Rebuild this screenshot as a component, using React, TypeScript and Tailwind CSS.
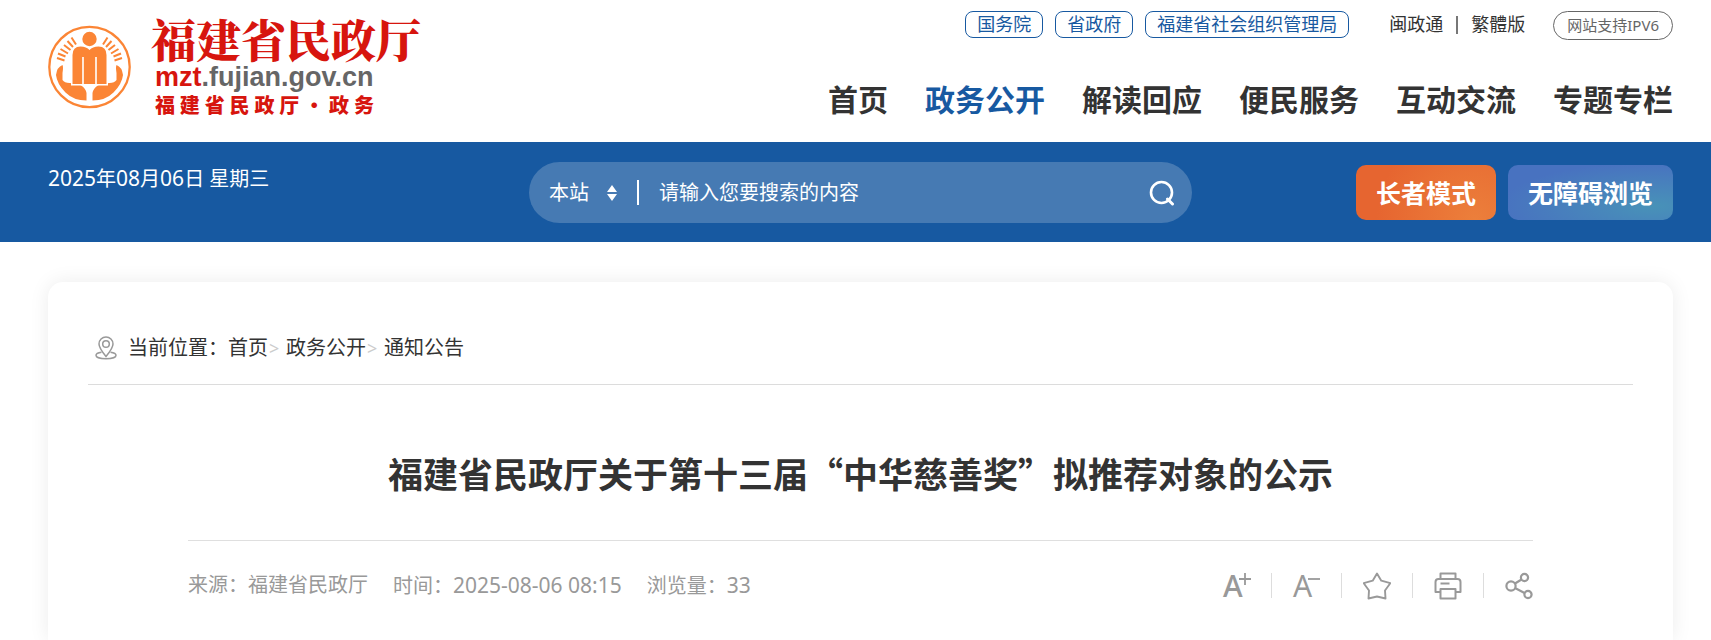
import React, { useState } from 'react';

const TOP_LINKS = ['国务院', '省政府', '福建省社会组织管理局'];

const NAV_ITEMS = ['首页', '政务公开', '解读回应', '便民服务', '互动交流', '专题专栏'];

const HAND = 'M14.500 40q1 2 0 8v7q2 3 7 3q15 0 17 10v7.500q-13 0-21-8Q9 59 8 50q1-8 6.500-10z';
const RAYS = 'M9 33l7.500 2.500M10 28.500l7.500 3M12.500 24l7.500 4.500M16 20l6.500 5M19.500 16l5.500 6M23.500 12.500l4.500 7';

const Emblem = (): React.ReactNode => (
  <svg viewBox="0 0 84 84" className="w-21 h-21 shrink-0" aria-hidden="true">
    <circle cx="41.500" cy="42" r="40.200" fill="none" stroke="#fb8535" strokeWidth="2.300" />
    <circle cx="41.500" cy="14" r="7.200" fill="#fb8535" />
    <path d={HAND} fill="#fb8535" />
    <path d={RAYS} stroke="#fb8535" strokeWidth="2" />
    <g transform="translate(83 0) scale(-1 1)">
      <path d={HAND} fill="#fb8535" />
      <path d={RAYS} stroke="#fb8535" strokeWidth="2" />
    </g>
    <path
      d="M24.500 59V30q0-8.500 8-8.500q6 0 9 3.500q3-3.500 9-3.500q8 0 8 8.500v29z"
      fill="#fb8535"
      stroke="#fff"
      strokeWidth="3"
      paintOrder="stroke"
    />
    <path d="M35 60V32M48 60V32" fill="none" stroke="#fff" strokeWidth="1.600" />
  </svg>
);

const Logo = (): React.ReactNode => (
  <a href="#" className="flex self-start items-center gap-[19px] pt-4">
    <Emblem />
    <div className="text-[#d7150e]">
      <div className="text-[45px] leading-[46px] font-black font-['Noto_Serif_CJK_SC','Noto_Sans_CJK_SC',serif]">
        福建省民政厅
      </div>
      <div className="pl-1 text-[27px] leading-[30px] font-bold font-['Liberation_Sans',sans-serif]">
        mzt<span className="text-[#666]">.fujian.gov.cn</span>
      </div>
      <div className="ml-1 w-[219px] text-xl leading-[26px] font-black font-['Noto_Sans_CJK_SC',sans-serif] [text-align-last:justify]">
        福建省民政厅·政务
      </div>
    </div>
  </a>
);

const Header = (): React.ReactNode => (
  <header className="flex justify-between h-[142px] pl-12 pr-[38px]">
    <Logo />
    <div className="flex flex-col items-end pt-[11px]">
      <div className="flex items-start text-lg leading-[25px]">
        <div className="flex gap-3">
          {TOP_LINKS.map((link) => (
            <a key={link} href="#" className="px-[11px] border border-[#1759a1] rounded-lg text-[#1759a1]">
              {link}
            </a>
          ))}
        </div>
        <div className="flex items-center ml-10 pt-px">
          <a href="#">闽政通</a>
          <span className="w-0.5 h-[18px] mx-[13px] bg-[#777]" />
          <a href="#">繁體版</a>
        </div>
        <a
          href="#"
          className="ml-7 px-[13px] border border-[#666] rounded-full text-[15px] leading-[27px] text-[#666]"
        >
          网站支持IPV6
        </a>
      </div>
      <nav className="flex gap-[37px] mt-[37px] text-[30px] leading-[45px] font-bold">
        {NAV_ITEMS.map((item) => (
          <a key={item} href="#" className={item === '政务公开' ? 'text-[#1759a1]' : ''}>
            {item}
          </a>
        ))}
      </nav>
    </div>
  </header>
);

const SearchBar = (): React.ReactNode => {
  const [keyword, setKeyword] = useState('');

  return (
    <form
      className="flex items-center w-[663px] h-[61px] mt-5 pl-5 pr-[17px] rounded-full bg-[#467ab3] text-xl"
      onSubmit={(e) => e.preventDefault()}
    >
      <select aria-label="搜索范围" className="appearance-none w-[58px] bg-transparent outline-none">
        <option>本站</option>
      </select>
      <svg viewBox="0 0 10 16" className="w-2.5 h-4 shrink-0" fill="#fff" aria-hidden="true">
        <path d="M5 0l5 7H0zM5 16l5-7H0z" />
      </svg>
      <span className="w-0.5 h-[25px] ml-5 mr-5 bg-white" />
      <input
        aria-label="搜索内容"
        className="flex-1 min-w-0 bg-transparent outline-none placeholder:text-white"
        placeholder="请输入您要搜索的内容"
        value={keyword}
        onChange={(e) => setKeyword(e.target.value)}
      />
      <button type="submit" aria-label="搜索">
        <svg viewBox="0 0 26 26" className="w-[26px] h-[26px]" fill="none" stroke="#fff" strokeWidth="2.6">
          <circle cx="12.5" cy="12.5" r="10.5" />
          <path d="M18.5 19l5 5" strokeWidth="3" strokeLinecap="round" />
        </svg>
      </button>
    </form>
  );
};

const Toolbar = (): React.ReactNode => (
  <div className="flex justify-between h-[100px] pl-12 pr-[38px] bg-[#1759a1] text-white">
    <div className="flex-1 pt-[21px] text-xl leading-[30px]">
      <span className="text-[21px]">2025</span>年<span className="text-[21px]">08</span>月
      <span className="text-[21px]">06</span>日 星期三
    </div>
    <SearchBar />
    <div className="flex flex-1 items-start justify-end gap-3 pt-[23px] text-[25px] leading-[53px] font-bold">
      <button className="pt-0.5 px-5 rounded-[10px] bg-[radial-gradient(circle_at_85%_100%,#ec7f3b,#e66530_75%)]">
        长者模式
      </button>
      <button className="pt-0.5 px-5 rounded-[10px] bg-[radial-gradient(ellipse_at_88%_75%,#4892b8,#4872c0_75%)]">
        无障碍浏览
      </button>
    </div>
  </div>
);

const Breadcrumb = (): React.ReactNode => (
  <nav className="flex items-center h-[63px] pl-[7px] pb-2.5 border-b border-[#dcdcdc] text-xl">
    <svg viewBox="0 0 22 24" className="w-[22px] h-6 mr-[11px]" fill="none" stroke="#999" strokeWidth="1.5">
      <path d="M11 20.500Q4 12 4 8a7 7 0 0 1 14 0q0 4-7 12.500z" />
      <circle cx="11" cy="8" r="3.300" />
      <path d="M6.500 16.200C3 16.700 1 17.800 1 19.200c0 2 4 3.600 10 3.600s10-1.600 10-3.600c0-1.400-2-2.500-5.500-3" />
    </svg>
    <span>当前位置：</span>
    <a href="#">首页</a>
    <span className="w-[18px] pl-px text-lg text-[#ccc]">&gt;</span>
    <a href="#">政务公开</a>
    <span className="w-[18px] pl-px text-lg text-[#ccc]">&gt;</span>
    <a href="#">通知公告</a>
  </nav>
);

const Divider = (): React.ReactNode => <span className="w-px h-[25px] bg-[#ddd]" />;

const ArticleTools = (): React.ReactNode => (
  <div className="flex items-center gap-[21px]">
    <button aria-label="放大字体" className="flex w-[27px] h-[26px] text-[30px] leading-[26px] font-medium">
      A
      <svg viewBox="0 0 12 12" className="w-3 h-3 -ml-1 shrink-0" stroke="#999" strokeWidth="1.800">
        <path d="M0 6h12M6 0v12" />
      </svg>
    </button>
    <Divider />
    <button aria-label="缩小字体" className="flex w-[27px] h-[26px] text-[30px] leading-[26px]">
      A
      <svg viewBox="0 0 12 12" className="w-3 h-3 -ml-1 shrink-0" stroke="#999" strokeWidth="1.800">
        <path d="M0 6h12" />
      </svg>
    </button>
    <Divider />
    <button aria-label="收藏" className="w-7">
      <svg viewBox="0 0 28 28" className="w-7 h-7" fill="none" stroke="#999" strokeWidth="1.900" strokeLinejoin="round">
        <path d="M14 1.500l4.300 7.200 9 2.500-5.300 7.300.5 8-8.500-2-8.500 2 .5-8L.700 11.200l9-2.500z" />
      </svg>
    </button>
    <Divider />
    <button aria-label="打印" className="w-7">
      <svg viewBox="0 0 28 28" className="w-7 h-7" fill="none" stroke="#999" strokeWidth="2" strokeLinejoin="round">
        <path d="M6.500 7V1.500h15V7M6.500 20H1.500V10q0-3 3-3h19q3 0 3 3v10h-5M6.500 17h15v9.500h-15zM6.500 11.500h9" />
      </svg>
    </button>
    <Divider />
    <button aria-label="分享" className="w-7">
      <svg viewBox="0 0 28 28" className="w-7 h-7" fill="none" stroke="#999" strokeWidth="2.200">
        <circle cx="6" cy="14" r="4.600" />
        <circle cx="19.500" cy="5.500" r="3.600" />
        <circle cx="23" cy="22.500" r="3.600" />
        <path d="M10 11.500l6.500-4M10 16l9.500 5" />
      </svg>
    </button>
  </div>
);

const Article = (): React.ReactNode => (
  <article className="px-[100px]">
    <h1 className="pt-[63px] pb-[42px] border-b border-[#dfdfdf] text-[35px] leading-[50px] font-bold text-center font-['Noto_Sans_CJK_SC',sans-serif]">
      福建省民政厅关于第十三届“中华慈善奖”拟推荐对象的公示
    </h1>
    <div className="flex items-center justify-between pt-6 text-xl leading-10 text-[#999]">
      <div className="flex gap-[25px]">
        <span>来源：福建省民政厅</span>
        <span>
          时间：<span className="text-[21px]">2025-08-06 08:15</span>
        </span>
        <span>
          浏览量：<span className="text-[21px]">33</span>
        </span>
      </div>
      <ArticleTools />
    </div>
  </article>
);

const App: React.FC = () => {
  return (
    <div className="flex flex-col min-h-screen bg-white text-[#333] font-['Noto_Sans','Noto_Sans_CJK_SC',sans-serif]">
      <Header />
      <Toolbar />
      <main className="flex-1 mt-10 ml-12 mr-[38px] px-10 pt-10 rounded-t-[15px] bg-white shadow-[0_0_20px_rgba(0,0,0,0.08)]">
        <Breadcrumb />
        <Article />
      </main>
    </div>
  );
};

export default App;
